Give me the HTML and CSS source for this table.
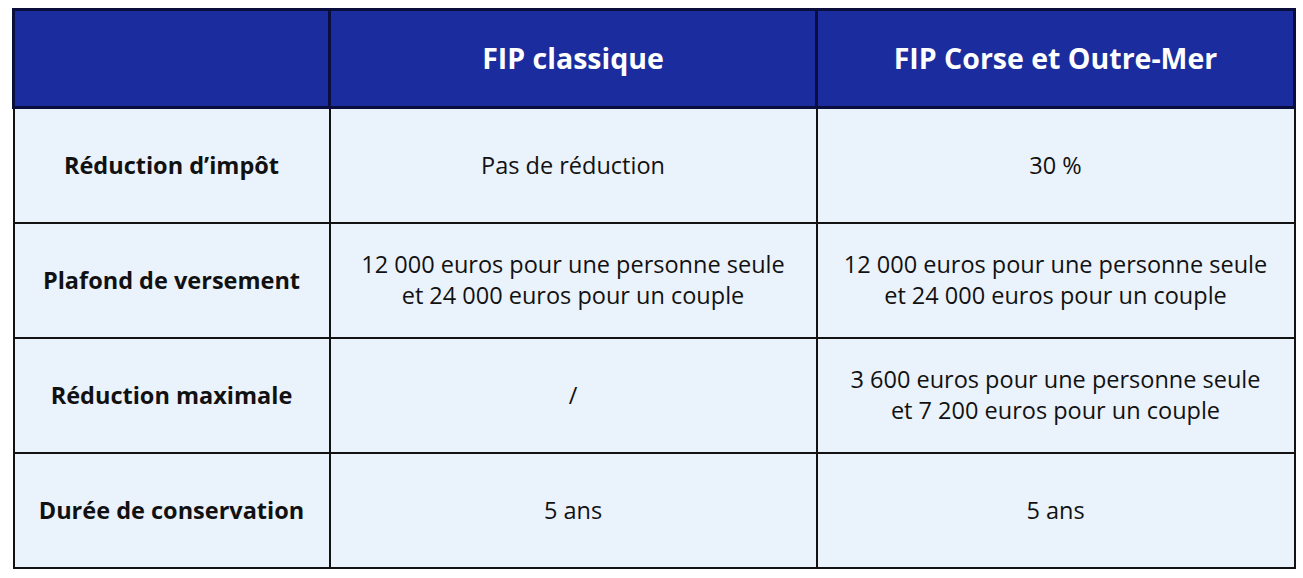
FILE: index.html
```html
<!DOCTYPE html>
<html lang="fr">
<head>
<meta charset="utf-8">
<link rel="stylesheet" href="styles.css">
</head>
<body>
<table class="cmp">
  <colgroup>
    <col class="c1"><col class="c2"><col class="c3">
  </colgroup>
  <thead>
    <tr class="head">
      <th></th>
      <th>FIP classique</th>
      <th>FIP Corse et Outre-Mer</th>
    </tr>
  </thead>
  <tbody>
    <tr>
      <th>Réduction d’impôt</th>
      <td>Pas de réduction</td>
      <td>30 %</td>
    </tr>
    <tr>
      <th>Plafond de versement</th>
      <td>12 000 euros pour une personne seule<br>et 24 000 euros pour un couple</td>
      <td>12 000 euros pour une personne seule<br>et 24 000 euros pour un couple</td>
    </tr>
    <tr>
      <th>Réduction maximale</th>
      <td>/</td>
      <td>3 600 euros pour une personne seule<br>et 7 200 euros pour un couple</td>
    </tr>
    <tr>
      <th>Durée de conservation</th>
      <td>5 ans</td>
      <td>5 ans</td>
    </tr>
  </tbody>
</table>
</body>
</html>
```
FILE: styles.css
```css
html, body {
  margin: 0;
  padding: 0;
  background: #ffffff;
}
body {
  padding: 8px 0 0 12px;
  font-family: "Open Sans", "Noto Sans", sans-serif;
  color: #111111;
}
.cmp {
  border-collapse: collapse;
  width: 1281px;
  table-layout: fixed;
}
.c1 { width: 316px; }
.c2 { width: 487px; }
.c3 { width: 478px; }
.cmp th, .cmp td {
  text-align: center;
  vertical-align: middle;
  padding: 0 6px;
  border: 2px solid #121212;
  background: #eaf2fb;
  font-size: 23.5px;
  line-height: 31px;
}
.cmp tbody tr { height: 115px; }
.cmp tbody th {
  font-weight: 700;
  font-size: 23.5px;
}
.cmp tbody td { font-weight: 400; }
.head { height: 98px; }
.head th {
  background: #1b2d9e;
  color: #ffffff;
  border: 3px solid #0a0e3c;
  font-size: 28.5px;
  font-weight: 700;
}
```
